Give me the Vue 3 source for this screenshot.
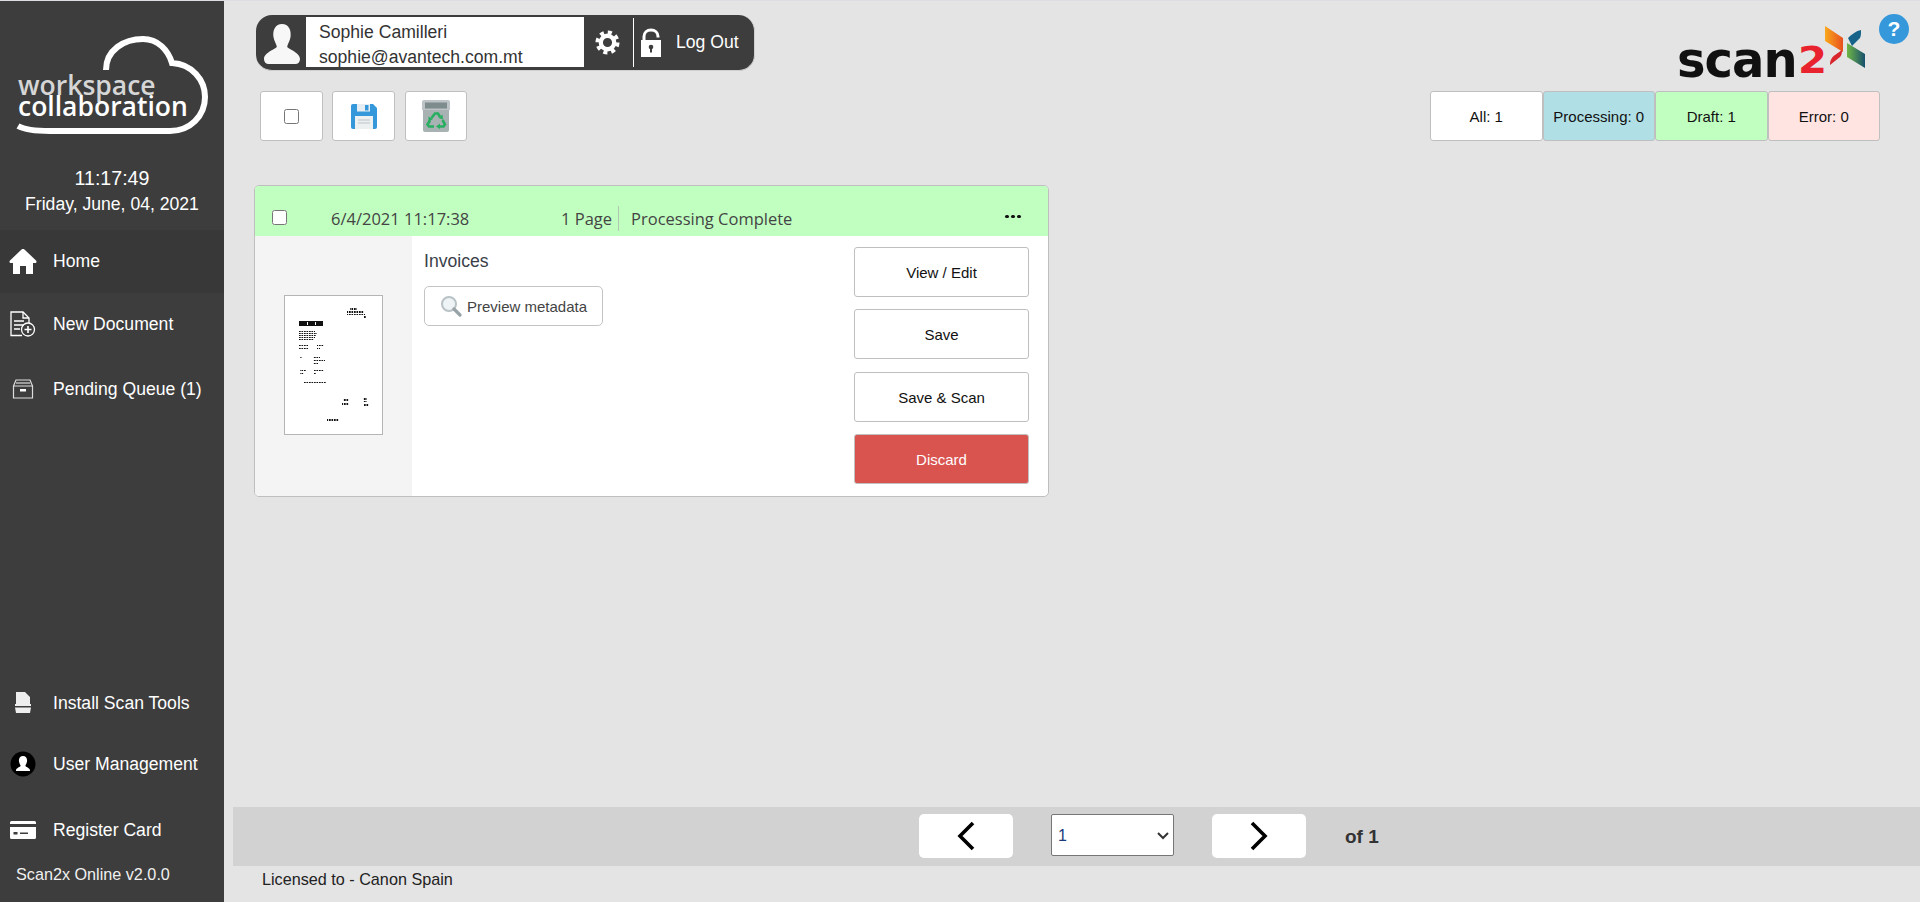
<script setup>
import { ref } from 'vue';

const topNav = [
  { id: 'home', label: 'Home', active: true },
  { id: 'new', label: 'New Document' },
  { id: 'queue', label: 'Pending Queue (1)' },
];
const bottomNav = [
  { id: 'tools', label: 'Install Scan Tools' },
  { id: 'users', label: 'User Management' },
  { id: 'card', label: 'Register Card' },
];
const tabs = [
  { label: 'All: 1', cls: 'tab-all' },
  { label: 'Processing: 0', cls: 'tab-processing' },
  { label: 'Draft: 1', cls: 'tab-draft' },
  { label: 'Error: 0', cls: 'tab-error' },
];
const actions = [
  { label: 'View / Edit' },
  { label: 'Save' },
  { label: 'Save & Scan' },
  { label: 'Discard', danger: true },
];
const page = ref(1);

// tiny blocks of the scanned invoice thumbnail
const thumbBlocks = [
  [15, 36, 16, 1], [15, 38, 18, 1], [15, 40, 17, 1], [15, 42, 16, 1], [15, 44, 15, 1],
  [15, 50, 9, 1], [15, 53, 9, 1], [33, 50, 7, 1], [33, 53, 3, 1],
  [16, 62, 2, 1], [29, 62, 7, 1], [29, 65, 12, 1], [29, 68, 5, 1],
  [16, 75, 6, 1], [16, 78, 4, 1], [30, 75, 10, 1], [30, 78, 2, 1],
  [20, 87, 22, 1],
  [59, 104, 6, 2], [58, 108, 7, 2], [79, 103, 4, 2], [79, 106, 4, 1], [80, 109, 5, 2],
  [43, 124, 12, 2],
  [63, 16, 17, 2], [66, 13, 7, 2], [63, 19, 18, 1], [80, 21, 2, 2],
];
</script>

<template>
  <div class="shell">
    <aside class="sidebar">
      <div class="brand">
        <svg class="cloud" width="224" height="145" viewBox="0 0 224 145">
          <path d="M106 70C106 50 124 39 143 39C158 39 168 50 172 63C192 64 205 80 205 97C205 116 190 131 170 131L50 131C35 131 25 130 18 126" fill="none" stroke="#fff" stroke-width="6" />
        </svg>
        <div class="brand-top">workspace</div>
        <div class="brand-bottom">collaboration</div>
      </div>
      <div class="clock">
        <div class="time">11:17:49</div>
        <div class="date">Friday, June, 04, 2021</div>
      </div>

      <nav class="nav nav-top">
        <a v-for="item in topNav" :key="item.id" :class="['nav-row', item.active ? 'nav-active' : '']">
          <span class="nav-icon">
            <svg v-if="item.id === 'home'" width="28" height="25" viewBox="0 0 28 25">
              <path d="M14 0C15 0 15.500 .5 16 1L27 11.500C28 12.500 27.500 14 26 14H24V25H17V17H11V25H4V14H2C.5 14 0 12.500 1 11.500L12 1C12.500 .5 13 0 14 0Z" fill="#fff" />
            </svg>
            <svg v-if="item.id === 'new'" width="26" height="26" viewBox="0 0 26 26" fill="none" stroke="#fff" stroke-width="1.300">
              <path d="M12 24.500H1V1H13L19 7V12" />
              <path d="M13 1V7H19" />
              <path d="M4 10H14M4 14H14M4 18H10" />
              <circle cx="18" cy="18.500" r="6.500" />
              <path d="M14.500 18.500H21.500M18 15V22" stroke-width="1.600" />
            </svg>
            <svg v-if="item.id === 'queue'" width="22" height="20" viewBox="0 0 22 20" fill="none" stroke="#ddd" stroke-width="1.200">
              <path d="M1.500 7V19H20.500V7Z" />
              <path d="M1.500 7L4 1H18L20.500 7" />
              <path d="M4 4H18" />
              <rect x="8" y="10" width="6" height="2.500" fill="#fff" stroke="none" />
            </svg>
          </span>
          {{ item.label }}
        </a>
      </nav>

      <nav class="nav nav-bottom">
        <a v-for="item in bottomNav" :key="item.id" class="nav-row">
          <span class="nav-icon">
            <svg v-if="item.id === 'tools'" width="18" height="22" viewBox="0 0 18 22">
              <path d="M2 0H11L16 5V12H17V14H1V12H2Z M1 15.500H17L16 21H2Z" fill="#eee" />
            </svg>
            <svg v-if="item.id === 'users'" width="26" height="26" viewBox="0 0 26 26">
              <circle cx="13" cy="13" r="12.500" fill="#000" />
              <path d="M13 5C16 5 17.500 7.500 17 10.500C16.700 12.500 15.600 13.800 15.400 14.800C15.300 16 20 17 20 19.500V20H6V19.500C6 17 10.700 16 10.600 14.800C10.400 13.800 9.300 12.500 9 10.500C8.500 7.500 10 5 13 5Z" fill="#fff" />
            </svg>
            <svg v-if="item.id === 'card'" width="26" height="18" viewBox="0 0 26 18">
              <path d="M1.500 0H24.500A1.500 1.500 0 0 1 26 1.500V3H0V1.500A1.500 1.500 0 0 1 1.500 0ZM0 6H26V16.500A1.500 1.500 0 0 1 24.500 18H1.500A1.500 1.500 0 0 1 0 16.500Z" fill="#fff" />
              <rect x="3.500" y="11" width="4" height="2.500" fill="#3d3d3d" />
              <rect x="10" y="11.500" width="8" height="1.500" fill="#3d3d3d" />
            </svg>
          </span>
          {{ item.label }}
        </a>
      </nav>
      <div class="version">Scan2x Online v2.0.0</div>
    </aside>

    <main class="main">
      <div class="topbar">
        <div class="user-pill">
          <svg class="avatar" width="36" height="40" viewBox="0 0 38 40" preserveAspectRatio="none">
            <path d="M19 0C26 0 29 6 28 13C27.400 17 25 20 24.500 22.500C24.300 25 38 28 38 35C38 38 36 40 33 40H5C2 40 0 38 0 35C0 28 13.700 25 13.500 22.500C13 20 10.600 17 10 13C9 6 12 0 19 0Z" fill="#f7f7f7" />
          </svg>
          <div class="user-box">
            <div>Sophie Camilleri</div>
            <div>sophie@avantech.com.mt</div>
          </div>
          <svg class="gear" width="25" height="25" viewBox="0 0 26 26" fill="none" stroke="#fff">
            <circle cx="13" cy="13" r="7" stroke-width="4.500" />
            <circle cx="13" cy="13" r="10.500" stroke-width="4" stroke-dasharray="4.200 4.046" />
          </svg>
          <div class="pill-sep"></div>
          <svg class="lock" width="20" height="29" viewBox="0 0 20 29">
            <path d="M3 14V8.500C3 4.500 6 2 10 2C14 2 17 4.500 17 8.500V9.500" fill="none" stroke="#fff" stroke-width="3" />
            <path d="M0 12H20V29H0Z" fill="#fff" />
            <circle cx="10" cy="19" r="2.300" fill="#3d3d3d" />
            <rect x="9" y="20" width="2" height="4.500" fill="#3d3d3d" />
          </svg>
          <span class="logout">Log Out</span>
        </div>

        <div class="logo">
          <span class="logo-scan">scan</span><span class="logo-two">2</span>
          <svg class="logo-x" width="41" height="44" viewBox="0 0 41 44">
            <defs>
              <linearGradient id="xOrange" x1="0" y1="0" x2="1" y2="0">
                <stop offset="0" stop-color="#f9a81b" />
                <stop offset="1" stop-color="#e8501f" />
              </linearGradient>
              <linearGradient id="xGreen" x1="0" y1="0" x2="1" y2="0">
                <stop offset="0" stop-color="#6fb644" />
                <stop offset="1" stop-color="#17506e" />
              </linearGradient>
            </defs>
            <path d="M0 0L18 12V26L0 15Z" fill="url(#xOrange)" />
            <path d="M5 39C5 34 7 31 10 29L17 24C17 28 16 30 15 31Z" fill="#d9252c" />
            <path d="M23 12C27 8 31 5 36 4C36 8 36 10 35 12L27 20Z" fill="#17648a" />
            <path d="M22 17L40 28V42L22 31Z" fill="url(#xGreen)" />
          </svg>
        </div>
        <span class="help">?</span>
      </div>

      <div class="toolbar">
        <div class="tools">
          <button class="tool"><input class="check" type="checkbox" /></button>
          <button class="tool">
            <svg width="26" height="25" viewBox="0 0 26 25">
              <path d="M2 0H22L26 4V23A2 2 0 0 1 24 25H2A2 2 0 0 1 0 23V2A2 2 0 0 1 2 0Z" fill="#3498db" />
              <rect x="6" y="0" width="13" height="7.500" fill="#e6eef3" />
              <rect x="14" y="1" width="3.500" height="5.500" fill="#3498db" />
              <rect x="4" y="12" width="18" height="13" fill="#ecf0f1" />
              <path d="M7 16H19M7 19H19" stroke="#bdc3c7" />
            </svg>
          </button>
          <button class="tool tool-bin">
            <svg width="28" height="32" viewBox="0 0 28 32">
              <path d="M2 0H26A2 2 0 0 1 28 2V10H0V2A2 2 0 0 1 2 0Z" fill="#bdc3c7" />
              <rect x="3" y="2.500" width="22" height="6" fill="#7f8c8d" />
              <path d="M1 10H27V30A2 2 0 0 1 25 32H3A2 2 0 0 1 1 30Z" fill="#a9b2b3" />
              <g fill="none" stroke="#27ae60" stroke-width="2.600">
                <path d="M9.500 18L13 13.500H16L18 17" />
                <path d="M20.500 20L23 24.500L21.500 26.500H17" />
                <path d="M12 26.500H7L5.500 24.500L8 20.500" />
              </g>
              <path d="M20.500 14.500L21 19.500L16.500 18ZM18 23.500V29L14 26.500ZM6.500 16.500L11 19L6.500 22Z" fill="#27ae60" />
            </svg>
          </button>
        </div>
        <div class="tabs">
          <button v-for="tab in tabs" :key="tab.label" :class="['tab', tab.cls]">{{ tab.label }}</button>
        </div>
      </div>

      <section class="card">
        <header class="card-head">
          <input class="check card-check" type="checkbox" />
          <span class="stamp">6/4/2021 11:17:38</span>
          <span class="pages">1 Page</span>
          <span class="status">Processing Complete</span>
          <span class="dots"><i></i><i></i><i></i></span>
        </header>
        <div class="card-body">
          <div class="thumb-panel">
            <svg class="thumb" width="99" height="140" viewBox="0 0 99 140">
              <defs>
                <pattern id="scanDots" width="2.500" height="2" patternUnits="userSpaceOnUse">
                  <rect width="1.700" height="2" fill="#111" />
                </pattern>
              </defs>
              <rect x="0.500" y="0.500" width="98" height="139" fill="#fff" stroke="#b5b5b5" />
              <rect x="15" y="26" width="24" height="5" fill="#111" />
              <rect x="23" y="27" width="1" height="3" fill="#fff" />
              <rect x="31" y="27" width="1" height="3" fill="#fff" />
              <rect v-for="(b, i) in thumbBlocks" :key="i" :x="b[0]" :y="b[1]" :width="b[2]" :height="b[3]" fill="url(#scanDots)" />
            </svg>
          </div>
          <div class="doc-info">
            <div class="doc-type">Invoices</div>
            <button class="preview-btn">
              <svg width="22" height="22" viewBox="0 0 22 22">
                <circle cx="9" cy="9" r="7" fill="#eef3f5" stroke="#b9c2c6" stroke-width="2" />
                <path d="M14 14L20 20" stroke="#98a3a8" stroke-width="3.200" stroke-linecap="round" />
              </svg>
              Preview metadata
            </button>
          </div>
          <div class="actions">
            <button v-for="a in actions" :key="a.label" :class="['action', a.danger ? 'action-danger' : '']">{{ a.label }}</button>
          </div>
        </div>
      </section>

      <div class="pager">
        <button class="page-btn">
          <svg width="18" height="30" viewBox="0 0 18 30"><path d="M16 2L3 15L16 28" fill="none" stroke="#000" stroke-width="3.600" /></svg>
        </button>
        <div class="select-wrap">
          <select v-model="page" class="page-select">
            <option :value="1">1</option>
          </select>
          <svg class="select-arrow" width="12" height="8" viewBox="0 0 12 8"><path d="M1 1L6 6L11 1" fill="none" stroke="#333" stroke-width="2" /></svg>
        </div>
        <button class="page-btn">
          <svg width="18" height="30" viewBox="0 0 18 30"><path d="M2 2L15 15L2 28" fill="none" stroke="#000" stroke-width="3.600" /></svg>
        </button>
        <span class="page-of">of 1</span>
      </div>
      <div class="license">Licensed to - Canon Spain</div>
    </main>
  </div>
</template>

<style>
html, body {
  margin: 0;
  background: #e4e4e4;
}
</style>

<style scoped>
.shell {
  display: flex;
  height: 901px;
  border-top: 1px solid #dddde2;
  overflow: hidden;
  font-family: "Liberation Sans", Arial, sans-serif;
  color: #333;
}

.sidebar {
  width: 224px;
  flex-shrink: 0;
  display: flex;
  flex-direction: column;
  background: #3d3d3d;
  color: #fff;
}

.brand {
  position: relative;
  height: 165px;
  padding: 74px 0 0 18px;
  box-sizing: border-box;
  font-family: "Open Sans", sans-serif;
  font-size: 26.500px;
  line-height: 21px;
  font-weight: 600;
}

.cloud {
  position: absolute;
  left: 0;
  top: -1px;
}

.brand-top {
  color: #d6d6d6;
}

.brand-bottom {
  color: #fff;
}

.clock {
  text-align: center;
  height: 64px;
}

.time {
  font-size: 19.600px;
  line-height: 24px;
}

.date {
  font-size: 17.600px;
  line-height: 24px;
  margin-top: 2px;
}

.nav {
  display: flex;
  flex-direction: column;
}

.nav-row {
  display: flex;
  align-items: center;
  height: 66px;
  font-size: 17.600px;
  color: #fff;
  box-sizing: border-box;
}

.nav-top .nav-row:nth-child(2) {
  height: 62px;
}

.nav-top .nav-row:nth-child(3) {
  height: 68px;
}

.nav-active {
  background: #383838;
  height: 63px;
}

.nav-bottom .nav-row:first-child {
  height: 56px;
}

.nav-icon {
  width: 53px;
  flex-shrink: 0;
  display: flex;
  justify-content: center;
  padding-right: 8px;
  box-sizing: border-box;
}

.nav-bottom {
  margin-top: auto;
}

.version {
  font-size: 16.200px;
  padding: 0 0 19px 16px;
  line-height: 18px;
  color: #f0f0f0;
  margin-top: 2px;
}

.main {
  flex: 1;
  min-width: 0;
  display: flex;
  flex-direction: column;
  position: relative;
}

.topbar {
  display: flex;
  justify-content: space-between;
  margin: 14px 54px 0 32px;
  height: 76px;
}

.user-pill {
  display: flex;
  align-items: center;
  width: 499px;
  height: 56px;
  box-sizing: border-box;
  background: #3d3d3d;
  border-radius: 16px;
  border: 1px solid #cfcfcf;
  border-width: 0 1px 1px 0;
  color: #fff;
  font-size: 17.600px;
}

.avatar {
  margin-left: 8px;
  margin-top: 2px;
}

.user-box {
  width: 278px;
  height: 50px;
  margin-left: 6px;
  margin-top: -1px;
  padding: 3px 0 0 13px;
  box-sizing: border-box;
  background: #fff;
  color: #333;
  line-height: 25px;
  overflow: hidden;
}

.gear {
  margin-left: 11px;
}

.pill-sep {
  width: 1px;
  height: 49px;
  margin-left: 13px;
  background: #fff;
}

.lock {
  margin-left: 7px;
}

.logout {
  margin-left: 15px;
}

.logo {
  position: relative;
  display: flex;
  align-items: flex-end;
  height: 65px;
  width: 187px;
  font-family: "DejaVu Sans", sans-serif;
  font-weight: 700;
  line-height: 1;
}

.logo-scan {
  display: inline-block;
  font-size: 50px;
  color: #111;
  letter-spacing: -1px;
  transform-origin: left bottom;
  line-height: 40px;
  width: 118px;
  margin-left: -2px;
  transform: scaleX(0.960);
}

.logo-two {
  font-size: 38px;
  color: #e8232e;
  line-height: 40px;
  width: 26px;
  margin-left: 3px;
  transform: scaleX(1.100);
  transform-origin: left bottom;
}

.logo-x {
  margin-left: 1px;
  margin-bottom: 10px;
  flex-shrink: 0;
}

.help {
  position: absolute;
  top: 13px;
  right: 11px;
  width: 30px;
  height: 30px;
  border-radius: 50%;
  background: #3498db;
  color: #fff;
  font-size: 21px;
  font-weight: 700;
  line-height: 30px;
  text-align: center;
}

.toolbar {
  display: flex;
  justify-content: space-between;
  margin: 0 40px 0 36px;
  height: 94px;
}

.tools {
  display: flex;
  gap: 9px;
}

.tool {
  width: 63px;
  height: 50px;
  padding: 0;
  background: #fff;
  border: 1px solid #bfbfbf;
  border-radius: 3px;
  display: flex;
  align-items: center;
  justify-content: center;
}

.tool-bin {
  width: 62px;
  margin-left: 1px;
}

.check {
  width: 15px;
  height: 15px;
  margin: 0;
}

.tabs {
  display: flex;
}

.tab {
  width: 112.500px;
  height: 50px;
  padding: 0;
  border: 1px solid #bfbfbf;
  border-radius: 3px;
  font-family: inherit;
  font-size: 15px;
  color: #111;
}

.tab-all {
  background: #fff;
}

.tab-processing {
  background: #b0dfe5;
}

.tab-draft {
  background: #c1ffc1;
}

.tab-error {
  background: #ffe4e1;
}

.card {
  width: 795px;
  height: 312px;
  margin-left: 30px;
  box-sizing: border-box;
  background: #fff;
  border: 1px solid #bfbfbf;
  border-radius: 5px;
  overflow: hidden;
  display: flex;
  flex-direction: column;
}

.card-head {
  display: flex;
  align-items: center;
  height: 50px;
  padding: 14px 0 0 17px;
  box-sizing: border-box;
  background: #c1ffc1;
  font-family: "Open Sans", sans-serif;
  font-size: 16.500px;
  color: #444;
}

.card-check {
  margin-top: -1px;
}

.stamp {
  margin-left: 44px;
  width: 230px;
}

.pages {
  padding-right: 6px;
  margin-right: 12px;
  border-right: 1px solid #b0c8b0;
  line-height: 25px;
}

.status {
  width: 374px;
}

.dots {
  display: flex;
  gap: 2.500px;
  margin-top: -3px;
}

.dots i {
  width: 3.500px;
  height: 3.500px;
  border-radius: 50%;
  background: #111;
}

.card-body {
  flex: 1;
  display: flex;
}

.thumb-panel {
  width: 157px;
  flex-shrink: 0;
  background: #f4f4f4;
  padding: 59px 0 0 29px;
  box-sizing: border-box;
}

.doc-info {
  flex: 1;
  padding: 15px 0 0 12px;
}

.doc-type {
  font-size: 17.600px;
  line-height: 20px;
  color: #3a3f4a;
}

.preview-btn {
  display: flex;
  align-items: center;
  gap: 5px;
  width: 179px;
  height: 40px;
  margin-top: 15px;
  padding: 0 0 0 15px;
  background: #fff;
  border: 1px solid #c4c4c4;
  border-radius: 5px;
  font-family: inherit;
  font-size: 15px;
  color: #444;
}

.actions {
  display: flex;
  flex-direction: column;
  gap: 12px;
  width: 175px;
  margin: 11px 19px 0 0;
}

.action {
  height: 50px;
  padding: 0;
  background: #fff;
  border: 1px solid #bfbfbf;
  border-radius: 3px;
  font-family: inherit;
  font-size: 15px;
  color: #111;
}

.action:nth-child(3) {
  margin-top: 1px;
}

.action-danger {
  background: #d9534f;
  color: #fff;
}

.pager {
  margin: auto 0 0 9px;
  height: 59px;
  display: flex;
  align-items: center;
  padding-left: 686px;
  background: #d2d2d2;
}

.page-btn {
  width: 94px;
  height: 44px;
  margin-top: -1px;
  padding: 0;
  background: #fff;
  border: none;
  border-radius: 5px;
  display: flex;
  align-items: center;
  justify-content: center;
}

.select-wrap {
  position: relative;
  width: 123px;
  height: 42px;
  margin: -3px 38px 0 38px;
}

.page-select {
  width: 100%;
  height: 100%;
  padding-left: 6px;
  appearance: none;
  background: #fff;
  border: 1px solid #767676;
  border-radius: 2px;
  font-family: inherit;
  font-size: 16px;
  color: #1a3a7a;
}

.select-arrow {
  position: absolute;
  right: 5px;
  top: 18px;
  pointer-events: none;
}

.page-of {
  margin-left: 39px;
  font-size: 19px;
  font-weight: 700;
  color: #333;
}

.license {
  height: 36px;
  padding: 4px 0 0 38px;
  box-sizing: border-box;
  font-size: 16.200px;
  line-height: 18px;
  color: #222;
}
</style>
